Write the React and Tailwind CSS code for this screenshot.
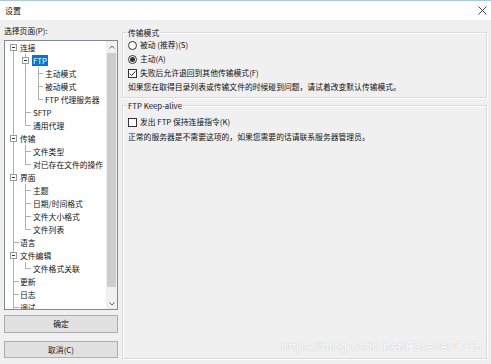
import React from 'react';

const TREE = [
  { t: '连接', l: 0, exp: true, first: true },
  { t: 'FTP', l: 1, exp: true, sel: true },
  { t: '主动模式', l: 2 },
  { t: '被动模式', l: 2 },
  { t: 'FTP 代理服务器', l: 2, last: true },
  { t: 'SFTP', l: 1 },
  { t: '通用代理', l: 1, last: true },
  { t: '传输', l: 0, exp: true },
  { t: '文件类型', l: 1 },
  { t: '对已存在文件的操作', l: 1, last: true },
  { t: '界面', l: 0, exp: true },
  { t: '主题', l: 1 },
  { t: '日期/时间格式', l: 1 },
  { t: '文件大小格式', l: 1 },
  { t: '文件列表', l: 1, last: true },
  { t: '语言', l: 0 },
  { t: '文件编辑', l: 0, exp: true },
  { t: '文件格式关联', l: 1, last: true },
  { t: '更新', l: 0 },
  { t: '日志', l: 0 },
  { t: '调试', l: 0 },
];

const PAD = ['pl-[15px]', 'pl-[28px]', 'pl-[40px]'];
const VLINE = ['left-[8px]', 'left-[20px]', 'left-[33px]'];
const TICK = ['left-[8px] w-[6px]', 'left-[20px] w-[6px]', 'left-[33px] w-[5px]'];
const BOX = ['left-[5px]', 'left-[17px]', 'left-[30px]'];

const TreeRow = ({ item }) => {
  const { t, l, exp, sel, last, first } = item;
  return (
    <div className={`relative h-[13px] leading-[13px] ${PAD[l]}`}>
      {/* ancestor guides */}
      {l >= 1 && <span className={`absolute top-0 bottom-0 w-px bg-[#b0b0b0] ${VLINE[0]}`} />}
      {l >= 2 && <span className={`absolute top-0 bottom-0 w-px bg-[#b0b0b0] ${VLINE[1]}`} />}
      {/* own connector */}
      {first ? (
        <span className={`absolute top-[6px] bottom-0 w-px bg-[#b0b0b0] ${VLINE[l]}`} />
      ) : last ? (
        <span className={`absolute top-0 h-[7px] w-px bg-[#b0b0b0] ${VLINE[l]}`} />
      ) : (
        <span className={`absolute top-0 bottom-0 w-px bg-[#b0b0b0] ${VLINE[l]}`} />
      )}
      {exp ? (
        <span className={`absolute top-[3px] w-[7px] h-[7px] border border-[#9a9a9a] bg-white flex items-center justify-center ${BOX[l]}`}>
          <span className="w-[3px] h-px bg-[#333]" />
        </span>
      ) : (
        <span className={`absolute top-[6px] h-px bg-[#b0b0b0] ${TICK[l]}`} />
      )}
      <span className={sel ? 'bg-[#0078d7] text-white px-[1px] -ml-[1px]' : ''}>{t}</span>
    </div>
  );
};

const Radio = ({ checked, label }) => (
  <div className="flex items-center h-[14px] gap-[3px]">
    <span className="w-[9px] h-[9px] rounded-full border border-[#333] bg-white flex items-center justify-center">
      {checked && <span className="w-[5px] h-[5px] rounded-full bg-[#333]" />}
    </span>
    <span>{label}</span>
  </div>
);

const Check = ({ checked, label }) => (
  <div className="flex items-center h-[14px] gap-[3px]">
    <span className="w-[9px] h-[9px] border border-[#333] bg-white flex items-center justify-center">
      {checked && (
        <svg width="7" height="7" viewBox="0 0 7 7">
          <path d="M0.8 3.6 L2.7 5.5 L6.2 1.4" fill="none" stroke="#222" strokeWidth="1" />
        </svg>
      )}
    </span>
    <span>{label}</span>
  </div>
);

const GroupBox = ({ title, className, children }) => (
  <div className={`relative border border-[#d9d9d9] shadow-[inset_1px_1px_0_#ffffff,1px_1px_0_#ffffff] ${className}`}>
    <span className="absolute -top-[7px] left-[4px] bg-[#f0f0f0] px-px leading-[13px]">{title}</span>
    {children}
  </div>
);

const App = () => {
  return (
    <div
      className="w-[491px] h-[364px] bg-[#f0f0f0] flex flex-col text-[7.8px] text-[#111] overflow-hidden relative"
      style={{ fontFamily: '"Microsoft YaHei", "Noto Sans CJK SC", sans-serif' }}
    >
      {/* title bar */}
      <div className="h-[20px] bg-white border-t border-[#a9c8e8] flex items-center justify-between pl-[5px] pr-[4px] shrink-0">
        <span className="text-[8px]">设置</span>
        <svg width="9" height="9" viewBox="0 0 9 9">
          <path d="M0.5 0.5 L8.5 8.5 M8.5 0.5 L0.5 8.5" stroke="#333" strokeWidth="0.9" />
        </svg>
      </div>

      <div className="flex flex-1 px-[4px] pb-[5px]">
        {/* left column */}
        <div className="w-[114px] flex flex-col shrink-0">
          <div className="h-[20px] flex items-center pt-[2px]">选择页面(P):</div>
          <div className="h-[270px] border border-[#828790] bg-white flex">
            <div className="flex-1 overflow-hidden">
              {TREE.map((item) => (
                <TreeRow key={item.t} item={item} />
              ))}
            </div>
            <div className="w-[11px] bg-[#f0f0f0] flex flex-col">
              <div className="h-[11px] flex items-center justify-center">
                <svg width="6" height="4" viewBox="0 0 6 4">
                  <path d="M0.5 3.5 L3 1 L5.5 3.5" fill="none" stroke="#606060" strokeWidth="1" />
                </svg>
              </div>
              <div className="flex-1 px-px pt-px">
                <div className="h-[234px] bg-[#cdcdcd]" />
              </div>
              <div className="h-[11px] flex items-center justify-center">
                <svg width="6" height="4" viewBox="0 0 6 4">
                  <path d="M0.5 0.5 L3 3 L5.5 0.5" fill="none" stroke="#606060" strokeWidth="1" />
                </svg>
              </div>
            </div>
          </div>
          <button className="mt-[5px] h-[18px] border border-[#adadad] bg-[#e1e1e1] flex items-center justify-center">确定</button>
          <button className="mt-[8px] h-[17px] border border-[#adadad] bg-[#e1e1e1] flex items-center justify-center">取消(C)</button>
        </div>

        {/* right column */}
        <div className="flex-1 ml-[4px] pt-[12px] flex flex-col">
          <GroupBox title="传输模式" className="h-[66px] pl-[5px] pt-[5px]">
            <Radio label="被动 (推荐)(S)" />
            <Radio checked label="主动(A)" />
            <Check checked label="失败后允许退回到其他传输模式(F)" />
            <div className="h-[14px] flex items-center">如果您在取得目录列表或传输文件的时候碰到问题，请试着改变默认传输模式。</div>
          </GroupBox>
          <GroupBox title="FTP Keep-alive" className="flex-1 mt-[7px] pl-[5px] pt-[9px]">
            <Check label="发出 FTP 保持连接指令(K)" />
            <div className="h-[14px] mt-px flex items-center">正常的服务器是不需要这项的，如果您需要的话请联系服务器管理员。</div>
          </GroupBox>
        </div>
      </div>

      {/* watermark */}
      <div
        className="absolute right-[9px] bottom-[11px] text-[13.5px] text-white leading-none [text-shadow:0_0_1px_rgba(0,0,0,0.3)]"
        style={{ fontFamily: '"Liberation Sans", Arial, sans-serif' }}
      >
        https://blog.csdn.net/Forever1715
      </div>
    </div>
  );
};

export default App;
